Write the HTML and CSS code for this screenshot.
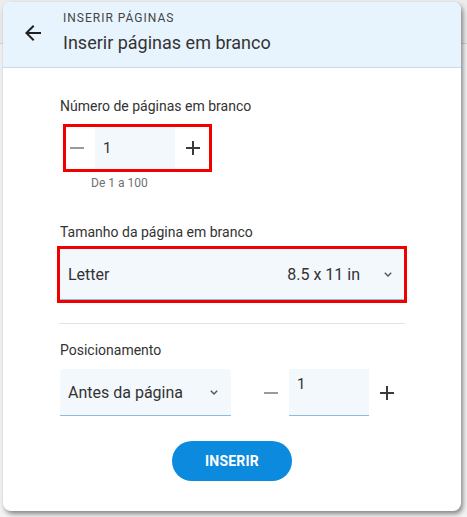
FILE: index.html
```html
<!DOCTYPE html>
<html lang="pt">
<head>
<meta charset="utf-8">
<title>Inserir páginas</title>
<link rel="stylesheet" href="styles.css">
</head>
<body>
<div class="dialog">
  <header class="hdr">
    <button class="back" aria-label="Voltar">
      <svg width="24" height="24" viewBox="0 0 24 24"><path d="M20 11H7.83l5.59-5.59L12 4l-8 8 8 8 1.41-1.41L7.83 13H20v-2z" fill="#1f1f1f"/></svg>
    </button>
    <div class="titles">
      <div class="eyebrow">INSERIR PÁGINAS</div>
      <div class="title">Inserir páginas em branco</div>
    </div>
  </header>
  <div class="content">
    <div class="label l1">Número de páginas em branco</div>
    <div class="stepper s1 hl">
      <button class="step minus"><span class="minus-ico"></span></button>
      <div class="num">1</div>
      <button class="step plus"><span class="plus-ico"></span></button>
    </div>
    <div class="hint">De 1 a 100</div>

    <div class="label l2">Tamanho da página em branco</div>
    <div class="select sel1 hl">
      <span class="val">Letter</span>
      <span class="spacer"></span>
      <span class="dim">8.5 x 11 in</span>
      <svg class="chev" width="8" height="5" viewBox="0 0 8 5"><polyline points="0.8,0.8 4,4 7.2,0.8" fill="none" stroke="#555" stroke-width="1.4"/></svg>
    </div>

    <div class="divider"></div>

    <div class="label l3">Posicionamento</div>
    <div class="row">
      <div class="select sel2">
        <span class="val">Antes da página</span>
        <span class="spacer"></span>
        <svg class="chev" width="8" height="5" viewBox="0 0 8 5"><polyline points="0.8,0.8 4,4 7.2,0.8" fill="none" stroke="#555" stroke-width="1.4"/></svg>
      </div>
      <div class="stepper s2">
        <button class="step minus"><span class="minus-ico"></span></button>
        <div class="num num2">1</div>
        <button class="step plus"><span class="plus-ico"></span></button>
      </div>
    </div>

    <div class="actions">
      <button class="primary">INSERIR</button>
    </div>
  </div>
</div>
</body>
</html>
```

FILE: styles.css
```css
* { box-sizing: border-box; }
html, body { margin: 0; padding: 0; }
body {
  width: 467px;
  height: 517px;
  overflow: hidden;
  font-family: Roboto, "Noto Sans", Arial, sans-serif;
  color: #333;
  background: linear-gradient(#ececec 0, #ececec 43px, #d4d4d4 43px, #d4d4d4 44px, #f3f3f3 44px);
  padding: 2px 0 0 3px;
}
button { font-family: inherit; border: 0; background: none; padding: 0; cursor: pointer; }

.dialog {
  width: 458px;
  height: 509px;
  background: #fff;
  border-radius: 8px;
  box-shadow: 2px 3px 5px rgba(0,0,0,0.45);
  overflow: hidden;
}

.hdr {
  height: 66px;
  background: #e8f4fd;
  border-bottom: 1px solid #c9d9e6;
  display: flex;
  align-items: flex-start;
  padding-left: 18px;
}
.back {
  width: 24px;
  height: 24px;
  margin-top: 19px;
  display: flex;
}
.titles {
  margin-left: 18px;
  padding-top: 8px;
}
.eyebrow {
  font-size: 12px;
  line-height: 16px;
  letter-spacing: 1px;
  color: #444;
}
.title {
  margin-top: 5px;
  font-size: 18px;
  line-height: 24px;
  color: #333;
}

.content {
  padding: 28px 57px 0 57px;
}
.label {
  font-size: 14px;
  line-height: 20px;
  color: #333;
}
.l2 { margin-top: 31px; }
.l3 { margin-top: 16px; }

.hl { outline: 3px solid #f20000; }

.stepper {
  display: flex;
  align-items: stretch;
}
.s1 {
  width: 143px;
  height: 42px;
  margin: 11px 0 0 6px;
}
.step {
  display: flex;
  align-items: center;
}
.minus { width: 29px; padding-left: 4px; }
.plus { width: 34px; padding-left: 11px; }
.minus-ico {
  width: 14px;
  height: 2px;
  background: #9a9a9a;
}
.plus-ico {
  width: 14px;
  height: 14px;
  background:
    linear-gradient(#3a3a3a, #3a3a3a) center / 14px 2px no-repeat,
    linear-gradient(#3a3a3a, #3a3a3a) center / 2px 14px no-repeat;
}
.num {
  width: 80px;
  background: #f3f8fd;
  font-size: 15px;
  line-height: 20px;
  padding: 11px 0 0 8px;
  color: #333;
}
.hint {
  margin: 6px 0 0 31px;
  font-size: 12px;
  line-height: 16px;
  color: #707070;
}

.select {
  display: flex;
  align-items: center;
  background: #f3f8fd;
  border-bottom: 1px solid #8dbbe2;
  font-size: 16px;
  color: #333;
}
.sel1 {
  height: 51px;
  margin-top: 7px;
  padding: 0 12px 0 8px;
}
.spacer { flex: 1; }
.dim { margin-right: 24px; }
.chev { display: block; }

.divider {
  height: 1px;
  background: #e2e2e2;
  margin: 23px -1px 0 -1px;
}

.row {
  display: flex;
  margin-top: 9px;
  height: 47px;
}
.sel2 {
  width: 171px;
  padding: 0 13px 0 8px;
  border-radius: 4px 4px 0 0;
}
.s2 {
  margin-left: 29px;
}
.num2 {
  border-bottom: 1px solid #8dbbe2;
  padding-top: 5px;
}

.actions {
  display: flex;
  justify-content: center;
  margin-top: 25px;
}
.primary {
  width: 120px;
  height: 40px;
  border-radius: 20px;
  background: #0b8ade;
  color: #fff;
  font-weight: 700;
  font-size: 14px;
  letter-spacing: 0.2px;
}
```
